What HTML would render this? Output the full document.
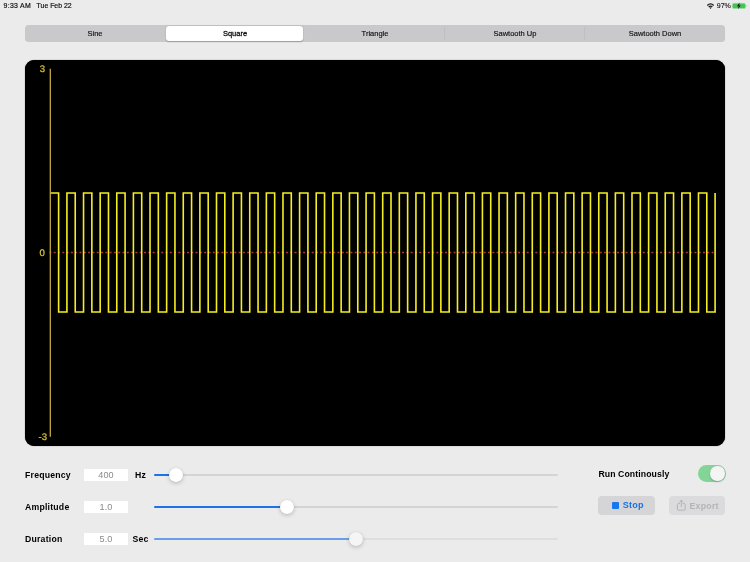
<!DOCTYPE html>
<html><head><meta charset="utf-8"><title>Waveform</title>
<style>
html,body{margin:0;padding:0;}
body{width:750px;height:562px;background:#ebebeb;overflow:hidden;position:relative;font-family:"Liberation Sans",sans-serif;color:#000;}
.abs{position:absolute;white-space:nowrap;}
.status{font-size:6.9px;top:1px;line-height:9px;color:#111;-webkit-text-stroke:0.2px #111;}
.seg{left:25px;top:25px;width:700px;height:17px;background:#c9c9cc;border-radius:3.5px;}
.seg .lbl{position:absolute;top:0;height:17px;line-height:17.5px;width:140px;text-align:center;font-size:7.5px;color:#111;-webkit-text-stroke:0.15px #111;}
.seg .sel{position:absolute;left:141px;top:1px;width:137px;height:15px;background:#fff;border-radius:3px;box-shadow:0 0.5px 1.5px rgba(0,0,0,.25);}
.seg .sep{position:absolute;top:2.3px;width:0.8px;height:12.4px;background:#bfbfc3;}
.chart{left:25px;top:59.8px;width:700px;height:385.9px;background:#000;border-radius:9px;box-shadow:0 0 0.8px 0 #000;}
.lab{font-size:8.7px;font-weight:bold;line-height:12px;letter-spacing:0.22px;}
.val{background:#fff;width:44px;height:12px;line-height:12.5px;text-align:center;font-size:9.1px;letter-spacing:0.15px;color:#8a8a8e;}
.track{margin-top:0.3px;height:2.1px;background:#d4d4d6;border-radius:1px;}
.fill{height:2.5px;margin-top:-0.2px;background:#1a73e8;border-radius:1px;}
.knob{width:14.6px;height:14.6px;border-radius:50%;background:#fff;box-shadow:0 1.5px 4px rgba(0,0,0,.2),0 0 1px rgba(0,0,0,.15);}
.btn{height:19px;border-radius:4px;background:#d5d5d8;}
#wrap{position:absolute;left:0;top:0;width:750px;height:562px;will-change:transform;}
</style></head><body><div id="wrap">
<div class="abs status" style="left:3.6px;letter-spacing:0.3px">9:33 AM</div>
<div class="abs status" style="left:36.6px;">Tue Feb 22</div>
<svg class="abs" style="left:704px;top:0px" width="46" height="12" viewBox="0 0 46 12">
 <g fill="none" stroke="#1c1c1c" stroke-width="1.35" stroke-linecap="butt">
  <path d="M3.3 5.4 Q6.5 2.3 9.7 5.4"/>
  <path d="M4.7 7.0 Q6.5 5.3 8.3 7.0"/>
 </g>
 <path d="M5.5 7.7 L6.5 8.9 L7.5 7.7 Q6.5 6.9 5.5 7.7 Z" fill="#1c1c1c"/>
 <text x="12.7" y="8.1" font-size="7.1" text-rendering="geometricPrecision" fill="#111" stroke="#111" stroke-width="0.08" font-family="Liberation Sans, sans-serif">97%</text>
 <rect x="28.3" y="3.3" width="13.3" height="5.2" rx="1.6" fill="#45c456" stroke="#a9d6ad" stroke-width="0.6"/>
 <rect x="42.3" y="4.9" width="0.9" height="2" rx="0.45" fill="#b5d8b8"/>
 <path d="M35.6 2.6 L33.0 6.2 L34.7 6.2 L34.0 8.9 L36.8 5.4 L35.1 5.4 Z" fill="#111"/>
</svg>

<div class="abs seg">
 <div class="sel"></div>
 <div class="sep" style="left:419.2px"></div>
 <div class="sep" style="left:559.2px"></div>
 <div class="lbl" style="left:0">Sine</div>
 <div class="lbl" style="left:140px;-webkit-text-stroke:0.3px #111">Square</div>
 <div class="lbl" style="left:280px">Triangle</div>
 <div class="lbl" style="left:420px">Sawtooth Up</div>
 <div class="lbl" style="left:560px">Sawtooth Down</div>
</div>

<div class="abs chart"></div>
<svg class="abs" style="left:0;top:0" width="750" height="562" viewBox="0 0 750 562">
 <line x1="49.4" y1="252.6" x2="715" y2="252.6" stroke="#d44a34" stroke-width="1.5" stroke-dasharray="2.0 2.3" opacity="0.8"/>
 <path d="M50.30 193.00 L58.61 193.00 L58.61 312.00 L66.92 312.00 L66.92 193.00 L75.23 193.00 L75.23 312.00 L83.54 312.00 L83.54 193.00 L91.85 193.00 L91.85 312.00 L100.16 312.00 L100.16 193.00 L108.47 193.00 L108.47 312.00 L116.78 312.00 L116.78 193.00 L125.09 193.00 L125.09 312.00 L133.40 312.00 L133.40 193.00 L141.71 193.00 L141.71 312.00 L150.02 312.00 L150.02 193.00 L158.33 193.00 L158.33 312.00 L166.64 312.00 L166.64 193.00 L174.95 193.00 L174.95 312.00 L183.26 312.00 L183.26 193.00 L191.57 193.00 L191.57 312.00 L199.88 312.00 L199.88 193.00 L208.19 193.00 L208.19 312.00 L216.50 312.00 L216.50 193.00 L224.81 193.00 L224.81 312.00 L233.12 312.00 L233.12 193.00 L241.43 193.00 L241.43 312.00 L249.74 312.00 L249.74 193.00 L258.05 193.00 L258.05 312.00 L266.36 312.00 L266.36 193.00 L274.67 193.00 L274.67 312.00 L282.98 312.00 L282.98 193.00 L291.29 193.00 L291.29 312.00 L299.60 312.00 L299.60 193.00 L307.91 193.00 L307.91 312.00 L316.22 312.00 L316.22 193.00 L324.53 193.00 L324.53 312.00 L332.84 312.00 L332.84 193.00 L341.15 193.00 L341.15 312.00 L349.46 312.00 L349.46 193.00 L357.77 193.00 L357.77 312.00 L366.08 312.00 L366.08 193.00 L374.39 193.00 L374.39 312.00 L382.70 312.00 L382.70 193.00 L391.01 193.00 L391.01 312.00 L399.32 312.00 L399.32 193.00 L407.63 193.00 L407.63 312.00 L415.94 312.00 L415.94 193.00 L424.25 193.00 L424.25 312.00 L432.56 312.00 L432.56 193.00 L440.87 193.00 L440.87 312.00 L449.18 312.00 L449.18 193.00 L457.49 193.00 L457.49 312.00 L465.80 312.00 L465.80 193.00 L474.11 193.00 L474.11 312.00 L482.42 312.00 L482.42 193.00 L490.73 193.00 L490.73 312.00 L499.04 312.00 L499.04 193.00 L507.35 193.00 L507.35 312.00 L515.66 312.00 L515.66 193.00 L523.97 193.00 L523.97 312.00 L532.28 312.00 L532.28 193.00 L540.59 193.00 L540.59 312.00 L548.90 312.00 L548.90 193.00 L557.21 193.00 L557.21 312.00 L565.52 312.00 L565.52 193.00 L573.83 193.00 L573.83 312.00 L582.14 312.00 L582.14 193.00 L590.45 193.00 L590.45 312.00 L598.76 312.00 L598.76 193.00 L607.07 193.00 L607.07 312.00 L615.38 312.00 L615.38 193.00 L623.69 193.00 L623.69 312.00 L632.00 312.00 L632.00 193.00 L640.31 193.00 L640.31 312.00 L648.62 312.00 L648.62 193.00 L656.93 193.00 L656.93 312.00 L665.24 312.00 L665.24 193.00 L673.55 193.00 L673.55 312.00 L681.86 312.00 L681.86 193.00 L690.17 193.00 L690.17 312.00 L698.48 312.00 L698.48 193.00 L706.79 193.00 L706.79 312.00 L715.10 312.00 L715.10 193.00" fill="none" stroke="#f5ee22" stroke-width="1.6" stroke-linejoin="miter"/>
 <line x1="50.3" y1="68.7" x2="50.3" y2="436.7" stroke="#c6a840" stroke-width="1.3"/>
 <g font-family="Liberation Sans, sans-serif" font-size="9.6" fill="#dcc63a" stroke="#dcc63a" stroke-width="0.25" stroke-linejoin="round" text-rendering="geometricPrecision" text-anchor="end">
  <text x="45.2" y="72.0">3</text>
  <text x="44.8" y="256.2">0</text>
  <text x="47.0" y="440.1">-3</text>
 </g>
</svg>

<div class="abs lab" style="left:25px;top:469px">Frequency</div>
<div class="abs lab" style="left:25px;top:501px">Amplitude</div>
<div class="abs lab" style="left:25px;top:533px">Duration</div>
<div class="abs val" style="left:84px;top:469px">400</div>
<div class="abs val" style="left:84px;top:501px">1.0</div>
<div class="abs val" style="left:84px;top:533px">5.0</div>
<div class="abs lab" style="left:135px;top:469px">Hz</div>
<div class="abs lab" style="left:132.5px;top:533px">Sec</div>

<div class="abs track" style="left:154px;top:474.05px;width:404px"></div>
<div class="abs fill" style="left:154px;top:474.05px;width:22px"></div>
<div class="abs knob" style="left:168.7px;top:467.8px"></div>

<div class="abs track" style="left:154px;top:505.95px;width:404px"></div>
<div class="abs fill" style="left:154px;top:505.95px;width:133px"></div>
<div class="abs knob" style="left:279.6px;top:499.7px"></div>

<div class="abs track" style="left:154px;top:537.95px;width:404px;opacity:.55"></div>
<div class="abs fill" style="left:154px;top:537.95px;width:201px;background:#6a9eea"></div>
<div class="abs knob" style="left:348.9px;top:531.7px;background:#f5f5f5"></div>

<div class="abs lab" style="left:598.4px;top:467.9px;letter-spacing:0.1px">Run Continously</div>
<div class="abs" style="left:697.8px;top:464.8px;width:28px;height:17.2px;border-radius:8.6px;background:#82d596;"></div>
<div class="abs" style="left:710.3px;top:466.3px;width:14.5px;height:14.5px;border-radius:50%;background:#f4f4f4;box-shadow:0 1px 2px rgba(0,0,0,.2)"></div>

<div class="abs btn" style="left:598.1px;top:495.6px;width:56.8px"></div>
<div class="abs" style="left:611.9px;top:501.6px;width:7.5px;height:7.5px;border-radius:1px;background:#1677f0"></div>
<div class="abs lab" style="left:622.8px;top:499.4px;font-size:9.1px;color:#1a73e0">Stop</div>
<div class="abs btn" style="left:668.7px;top:495.6px;width:56.5px;background:#dbdbde"></div>
<svg class="abs" style="left:676px;top:499.4px" width="11" height="13" viewBox="0 0 11 13">
 <g fill="none" stroke="#b4b4b8" stroke-width="1" stroke-linecap="round" stroke-linejoin="round">
  <path d="M3.6 4.6 H2.4 Q1.4 4.6 1.4 5.6 V10.2 Q1.4 11.2 2.4 11.2 H8.2 Q9.2 11.2 9.2 10.2 V5.6 Q9.2 4.6 8.2 4.6 H7"/>
  <path d="M5.3 7.6 V1.4 M3.6 3 L5.3 1.3 L7 3"/>
 </g>
</svg>
<div class="abs lab" style="left:689.5px;top:499.8px;font-size:8.8px;color:#b4b4b8">Export</div>
</div></body></html>
